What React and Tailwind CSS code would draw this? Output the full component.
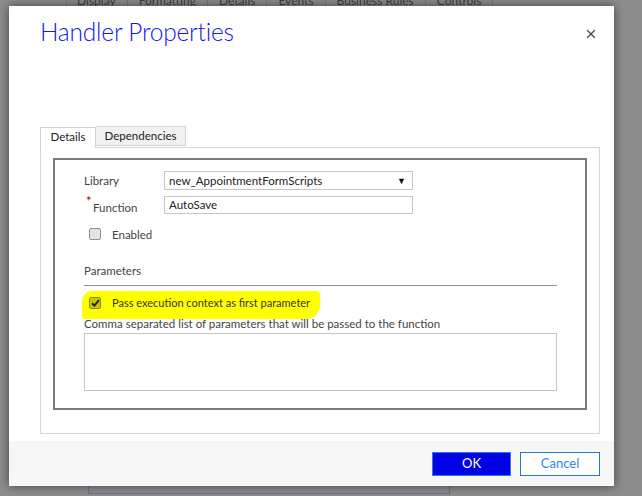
import { X } from 'lucide-react'

const bgTabs = ['Display', 'Formatting', 'Details', 'Events', 'Business Rules', 'Controls']

function Field({ children, h = 'h-[19px]' }) {
  return (
    <div className={`w-[249px] ${h} border border-[#c6c6c6] bg-white flex items-center px-[4px] text-[11.5px] text-[#222]`}>
      {children}
    </div>
  )
}

export default function App() {
  return (
    <div className="relative w-[642px] h-[496px] overflow-hidden bg-[#8d8d8d] font-['Lato','Liberation_Sans',sans-serif]">
      {/* page behind the modal */}
      <div className="absolute left-[56px] top-[-6px] flex h-[14px] border-b border-[#7a7a7a] text-[12px] leading-[14px] text-[#3d3d3d]">
        {bgTabs.map((t) => (
          <div key={t} className="px-[11px] border-r border-[#7a7a7a] first:pl-[10px] first:ml-[10px] first:border-l">{t}</div>
        ))}
      </div>
      <div className="absolute left-[88px] top-[486px] w-[362px] h-[8px] border border-t-0 border-[#5f7691]" />

      <div className="absolute left-[9px] top-[6px] w-[605px] h-[480px] bg-white flex flex-col shadow-[0_0_10px_rgba(0,0,0,0.55)]">
        <div className="flex items-start justify-between pl-[31px] pr-[16px] pt-[11px]">
          <h1 className="text-[24.5px] font-light text-[#1414f0] leading-[30px] tracking-[-0.2px]">Handler Properties</h1>
          <X size={14} strokeWidth={2.2} className="mt-[10px] text-[#444]" />
        </div>

        <div className="ml-[31px] mr-[14px] mt-[79px]">
          <div className="flex text-[11.5px] text-[#222] leading-[14px]">
            <div className="w-[56px] h-[21px] border border-b-0 border-[#d3d3d3] bg-white flex items-center justify-center relative top-[1px] pb-[2px]">Details</div>
            <div className="w-[90px] h-[20px] border border-l-0 border-[#d3d3d3] bg-[#f1f1f1] flex items-center justify-center">Dependencies</div>
          </div>
          <div className="h-[287px] border border-[#d6d6d6] pl-[12px] pr-[12px] pt-[10px]">
            <div className="h-[252px] border-2 border-[#7b7b7b] pl-[29px] pr-[28px] pt-[11px] text-[11.5px] leading-[14px] text-[#444]">
              <div className="flex items-center h-[19px]">
                <span className="w-[80px]">Library</span>
                <Field>
                  <span className="flex-1">new_AppointmentFormScripts</span>
                  <span className="text-[9px] text-[#111] pr-[2px]">▼</span>
                </Field>
              </div>
              <div className="flex items-center h-[19px] mt-[5px]">
                <span className="w-[80px] pl-[3px] relative h-[19px]">
                  <span className="absolute left-[2px] top-[0px] text-[#b00000] text-[13px] leading-[13px]">*</span>
                  <span className="absolute left-[9px] top-[6px]">Function</span>
                </span>
                <Field h="h-[18px]">AutoSave</Field>
              </div>
              <div className="flex items-center mt-[14px] pl-[5px] h-[12px]">
                <span className="w-[12px] h-[12px] rounded-[2px] border border-[#8f8f8f] bg-[#e4e4e4]" />
                <span className="ml-[11px] relative top-[1px]">Enabled</span>
              </div>

              <div className="mt-[24px] pb-[7px] border-b border-[#8e8e8e]">Parameters</div>

              <div className="relative mt-[5px] h-[28px]">
                <div className="absolute left-[-2px] top-[0px] w-[238px] h-[28px] bg-[#ffff00] rounded-tl-[10px] rounded-tr-[4px] rounded-bl-[3px] rounded-br-[14px]" />
                <div className="relative flex items-center h-[24px] pl-[5px]">
                  <span className="w-[12px] h-[12px] rounded-[2px] border border-[#8f8f00] bg-[#c9c900] flex items-center justify-center">
                    <svg width="9" height="8" viewBox="0 0 9 8">
                      <path d="M1 4.2 L3.4 6.6 L8 1.2" fill="none" stroke="#222" strokeWidth="2" />
                    </svg>
                  </span>
                  <span className="ml-[11px] text-[11px] text-[#333]">Pass execution context as first parameter</span>
                </div>
              </div>
              <div className="relative mt-[-2px]">Comma separated list of parameters that will be passed to the function</div>
              <div className="mt-[2px] h-[58px] border border-[#c6c6c6]" />
            </div>
          </div>
        </div>

        <div className="mt-auto h-[45px] bg-[#f6f6f6] flex items-start justify-end gap-[9px] pr-[14px] pt-[11px]">
          <button className="w-[79px] h-[24px] bg-[#0000e6] border border-[#2a7fd8] text-white text-[13px]">OK</button>
          <button className="w-[80px] h-[24px] bg-white border border-[#1b7ad2] text-[#2d86dd] text-[13px]">Cancel</button>
        </div>
      </div>
    </div>
  )
}
